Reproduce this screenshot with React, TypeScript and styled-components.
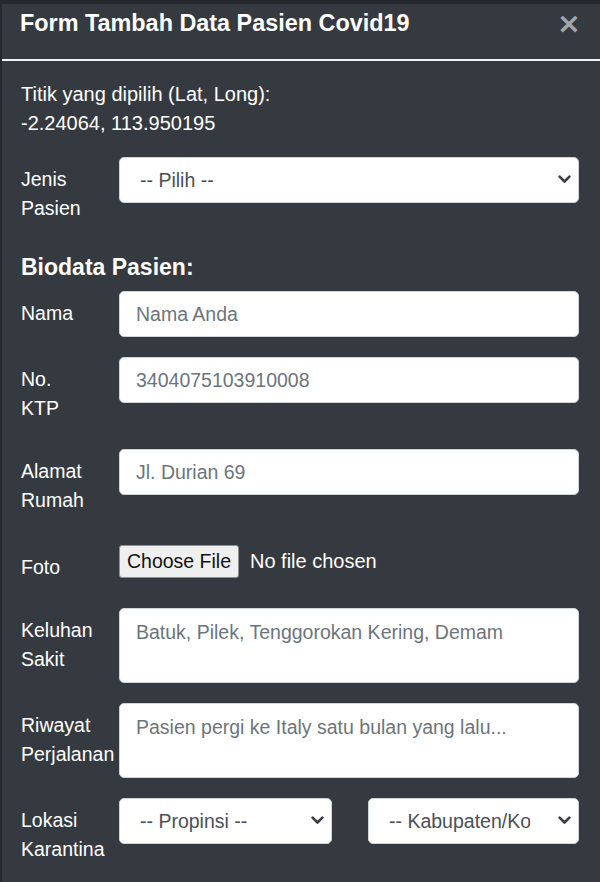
import * as React from "react";
import styled, {createGlobalStyle} from "styled-components";

const GlobalStyle = createGlobalStyle`
  html, body {
    margin: 0;
    padding: 0;
    background: #1f2226;
  }
  body {
    font-family: "Liberation Sans", Arial, sans-serif;
  }
`;

const Backdrop = styled.div`
  padding: 4px 0 0 2px;
  min-height: 878px;
  background: #25292d;
`;

const Modal = styled.div`
  background: #353a41;
  color: #fff;
  min-height: 878px;
`;

const Header = styled.div`
  display: flex;
  justify-content: space-between;
  align-items: flex-start;
  height: 57px;
  box-sizing: border-box;
  padding: 5px 19px 0 18px;
  border-bottom: 2px solid #f2f2f2;
`;

const Title = styled.h5`
  margin: 0;
  font-size: 23.4px;
  line-height: 29px;
  font-weight: 700;
`;

const Close = styled.button`
  border: 0;
  background: transparent;
  padding: 0;
  margin-top: -4px;
  color: #a3a6a9;
  font-family: "DejaVu Sans", sans-serif;
  font-size: 29px;
  font-weight: 700;
  line-height: 36px;
  cursor: pointer;
`;

const Body = styled.div`
  padding: 19px 21px 0 19px;
  font-size: 20px;
  line-height: 29px;
`;

const Coords = styled.p`
  margin: 0 0 19px;
`;

const Row = styled.div`
  display: grid;
  grid-template-columns: 98px 1fr;
  margin-bottom: 20px;
  align-items: start;
`;

const Label = styled.label<{$top?: number}>`
  display: block;
  padding: ${(p) => p.$top ?? 8}px 0 6px 0;
  font-size: 19.5px;
  line-height: 29px;
  white-space: nowrap;
`;

const SectionTitle = styled.h5`
  margin: 24px 0 9px;
  font-size: 23px;
  line-height: 29px;
  font-weight: 700;
`;

const Input = styled.input`
  box-sizing: border-box;
  width: 100%;
  height: 46px;
  padding: 0 16px;
  border: 1px solid #ced4da;
  border-radius: 5px;
  background: #fff;
  font-family: "Liberation Sans", Arial, sans-serif;
  font-size: 19.5px;
  color: #495057;
  outline: none;
  &::placeholder {
    color: #6c757d;
  }
`;

const TextArea = styled.textarea`
  box-sizing: border-box;
  display: block;
  width: 100%;
  height: 75px;
  padding: 9px 16px;
  border: 1px solid #ced4da;
  border-radius: 5px;
  background: #fff;
  font-family: "Liberation Sans", Arial, sans-serif;
  font-size: 19.5px;
  line-height: 29px;
  resize: none;
  outline: none;
  &::placeholder {
    color: #6c757d;
  }
`;

const SelectWrap = styled.div`
  position: relative;
`;

const Select = styled.select<{$clip?: number}>`
  box-sizing: border-box;
  display: block;
  width: 100%;
  height: 46px;
  padding: 0 ${(p) => p.$clip ?? 42}px 0 20px;
  border: 1px solid #ced4da;
  border-radius: 5px;
  background: #fff;
  appearance: none;
  font-family: "Liberation Sans", Arial, sans-serif;
  font-size: 19.5px;
  color: #495057;
  outline: none;
`;

const Chevron = styled.svg`
  position: absolute;
  right: 8px;
  top: 18px;
  width: 13px;
  height: 9px;
  pointer-events: none;
`;

const SelectPair = styled.div`
  display: grid;
  grid-template-columns: 213px 1fr;
  column-gap: 36px;
`;

const FileField = styled.div`
  display: flex;
  align-items: center;
  gap: 11px;
  margin-top: 4px;
`;

const FileButton = styled.button`
  box-sizing: border-box;
  height: 33px;
  width: 120px;
  padding: 0;
  border: 1px solid #8f8f8f;
  border-radius: 3px;
  background: #efefef;
  color: #111;
  font-family: "Liberation Sans", Arial, sans-serif;
  font-size: 19.5px;
`;

const FileName = styled.span`
  font-size: 20px;
`;

function Dropdown({placeholder, clip}: {placeholder: string; clip?: number}) {
  return (
    <SelectWrap>
      <Select defaultValue="" $clip={clip}>
        <option value="">{placeholder}</option>
      </Select>
      <Chevron viewBox="0 0 13 9">
        <path d="M1.6 1.6 L6.5 6.5 L11.4 1.6" fill="none" stroke="#3a3d41" strokeWidth="2.6" strokeLinecap="round" strokeLinejoin="round" />
      </Chevron>
    </SelectWrap>
  );
}

export default function App() {
  return (
    <>
      <GlobalStyle />
      <Backdrop>
        <Modal>
          <Header>
            <Title>Form Tambah Data Pasien Covid19</Title>
            <Close aria-label="Close">×</Close>
          </Header>
          <Body>
            <Coords>
              Titik yang dipilih (Lat, Long):
              <br />
              -2.24064, 113.950195
            </Coords>

            <Row>
              <Label>Jenis<br />Pasien</Label>
              <Dropdown placeholder="-- Pilih --" />
            </Row>

            <SectionTitle>Biodata Pasien:</SectionTitle>

            <Row>
              <Label>Nama</Label>
              <Input placeholder="Nama Anda" />
            </Row>
            <Row>
              <Label>No.<br />KTP</Label>
              <Input placeholder="3404075103910008" />
            </Row>
            <Row>
              <Label>Alamat<br />Rumah</Label>
              <Input placeholder="Jl. Durian 69" />
            </Row>
            <Row>
              <Label $top={12}>Foto</Label>
              <FileField>
                <FileButton type="button">Choose File</FileButton>
                <FileName>No file chosen</FileName>
              </FileField>
            </Row>
            <Row>
              <Label>Keluhan<br />Sakit</Label>
              <TextArea placeholder="Batuk, Pilek, Tenggorokan Kering, Demam" />
            </Row>
            <Row>
              <Label>Riwayat<br />Perjalanan</Label>
              <TextArea placeholder="Pasien pergi ke Italy satu bulan yang lalu..." />
            </Row>
            <Row>
              <Label>Lokasi<br />Karantina</Label>
              <SelectPair>
                <Dropdown placeholder="-- Propinsi --" />
                <Dropdown placeholder="-- Kabupaten/Kota --" clip={48} />
              </SelectPair>
            </Row>
          </Body>
        </Modal>
      </Backdrop>
    </>
  );
}
